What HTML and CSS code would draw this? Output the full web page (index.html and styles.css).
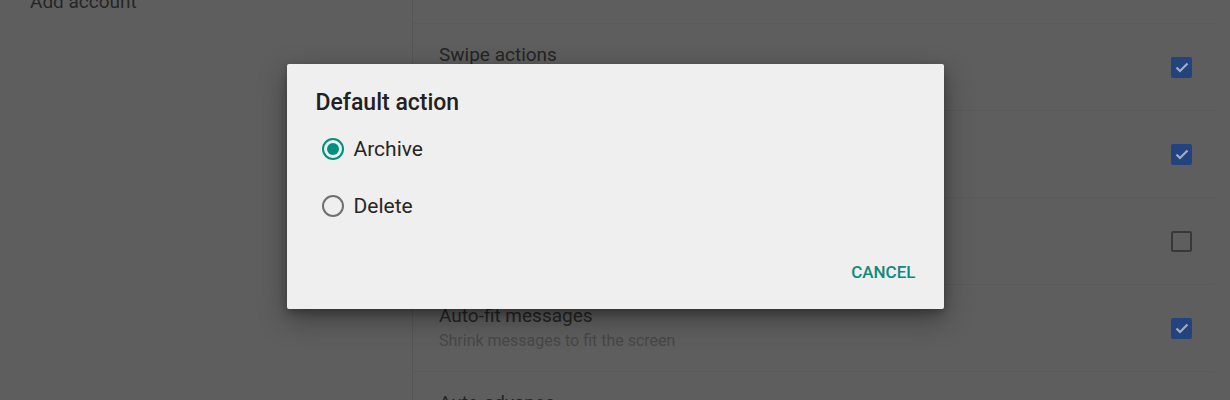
FILE: index.html
```html
<!DOCTYPE html>
<html lang="en">
<head>
    <meta charset="UTF-8">
    <meta name="viewport" content="width=device-width, initial-scale=1.0">
    <title>Settings - Default action</title>
    <link rel="stylesheet" href="styles.css">
</head>
<body>
    <div class="settings">
        <div class="accounts">
            <div class="account-item">Add account</div>
        </div>

        <div class="prefs">
            <div class="pref-row">
                <div class="pref-text">
                    <div class="pref-title">Gmail default action</div>
                    <div class="pref-sub">Archive</div>
                </div>
            </div>
            <div class="pref-row">
                <div class="pref-text">
                    <div class="pref-title">Swipe actions</div>
                    <div class="pref-sub">In conversation list</div>
                </div>
                <span class="checkbox checked">
                    <svg viewBox="0 0 16 16"><path d="M2.5 8.5l3.5 3.5 7.5-7.5" /></svg>
                </span>
            </div>
            <div class="pref-row">
                <div class="pref-text">
                    <div class="pref-title">Sender image</div>
                    <div class="pref-sub">Show beside names in conversation list</div>
                </div>
                <span class="checkbox checked">
                    <svg viewBox="0 0 16 16"><path d="M2.5 8.5l3.5 3.5 7.5-7.5" /></svg>
                </span>
            </div>
            <div class="pref-row">
                <div class="pref-text">
                    <div class="pref-title">Reply all</div>
                    <div class="pref-sub">Use as default for message replies</div>
                </div>
                <span class="checkbox"></span>
            </div>
            <div class="pref-row">
                <div class="pref-text">
                    <div class="pref-title">Auto-fit messages</div>
                    <div class="pref-sub">Shrink messages to fit the screen</div>
                </div>
                <span class="checkbox checked">
                    <svg viewBox="0 0 16 16"><path d="M2.5 8.5l3.5 3.5 7.5-7.5" /></svg>
                </span>
            </div>
            <div class="pref-row">
                <div class="pref-text">
                    <div class="pref-title">Auto-advance</div>
                    <div class="pref-sub">Show conversation list after you archive or delete</div>
                </div>
            </div>
        </div>
    </div>

    <div class="overlay">
        <div class="dialog">
            <h2>Default action</h2>
            <div class="option">
                <span class="radio selected"></span>
                Archive
            </div>
            <div class="option">
                <span class="radio"></span>
                Delete
            </div>
            <div class="dialog-actions">
                <button class="text-button">CANCEL</button>
            </div>
        </div>
    </div>
</body>
</html>
```

FILE: styles.css
```css
* {
    margin: 0;
    padding: 0;
    box-sizing: border-box;
}

body {
    font-family: Roboto, 'Noto Sans', sans-serif;
    background: #5e5e5e;
    width: 1230px;
    height: 400px;
    overflow: hidden;
    position: relative;
}

.settings {
    display: grid;
    grid-template-columns: 412px 1fr;
    height: 400px;
}

.accounts {
    padding-left: 30px;
}

.account-item {
    margin-top: -10px;
    font-size: 19px;
    line-height: 24px;
    color: #262626;
}

.prefs {
    border-left: 1px solid #565656;
    margin-top: -63px;
}

.pref-row {
    height: 87px;
    display: flex;
    align-items: center;
    justify-content: space-between;
    padding: 0 38px 0 26px;
    border-bottom: 1px solid #5a5a5a;
    margin-right: 16px;
}

.pref-title {
    font-size: 19px;
    line-height: 24px;
    color: #242424;
}

.pref-sub {
    font-size: 16px;
    line-height: 25px;
    color: #474747;
}

.checkbox {
    width: 21px;
    height: 21px;
    border: 2px solid #383838;
    border-radius: 2px;
    margin-right: -16px;
    display: flex;
    align-items: center;
    justify-content: center;
}

.checkbox.checked {
    background: #23437f;
    border-color: #23437f;
}

.checkbox svg {
    width: 16px;
    height: 16px;
    fill: none;
    stroke: #a3acc4;
    stroke-width: 2.2;
}

.overlay {
    position: absolute;
    top: 0;
    left: 0;
    right: 0;
    bottom: 0;
    display: flex;
    justify-content: center;
    align-items: flex-start;
    padding-top: 64px;
}

.dialog {
    width: 657px;
    height: 245px;
    background: #efefef;
    border-radius: 2px;
    box-shadow: 0 10px 28px rgba(0, 0, 0, 0.35), 0 4px 8px rgba(0, 0, 0, 0.25);
    padding: 25px 28px 19px 29px;
}

.dialog h2 {
    font-size: 23px;
    font-weight: 500;
    line-height: 28px;
    color: #212121;
    margin-bottom: 3px;
}

.option {
    height: 57px;
    display: flex;
    align-items: center;
    padding-left: 6px;
    gap: 10px;
    font-size: 21px;
    color: #262626;
}

.radio {
    width: 22px;
    height: 22px;
    border: 2px solid #707070;
    border-radius: 50%;
    display: flex;
    align-items: center;
    justify-content: center;
}

.radio.selected {
    border-color: #009080;
}

.radio.selected::after {
    content: '';
    width: 12px;
    height: 12px;
    border-radius: 50%;
    background: #009080;
}

.dialog-actions {
    margin-top: 20px;
    display: flex;
    justify-content: flex-end;
}

.text-button {
    height: 36px;
    background: none;
    border: none;
    font-family: inherit;
    font-size: 17px;
    font-weight: 500;
    color: #12897c;
    cursor: pointer;
}
```
